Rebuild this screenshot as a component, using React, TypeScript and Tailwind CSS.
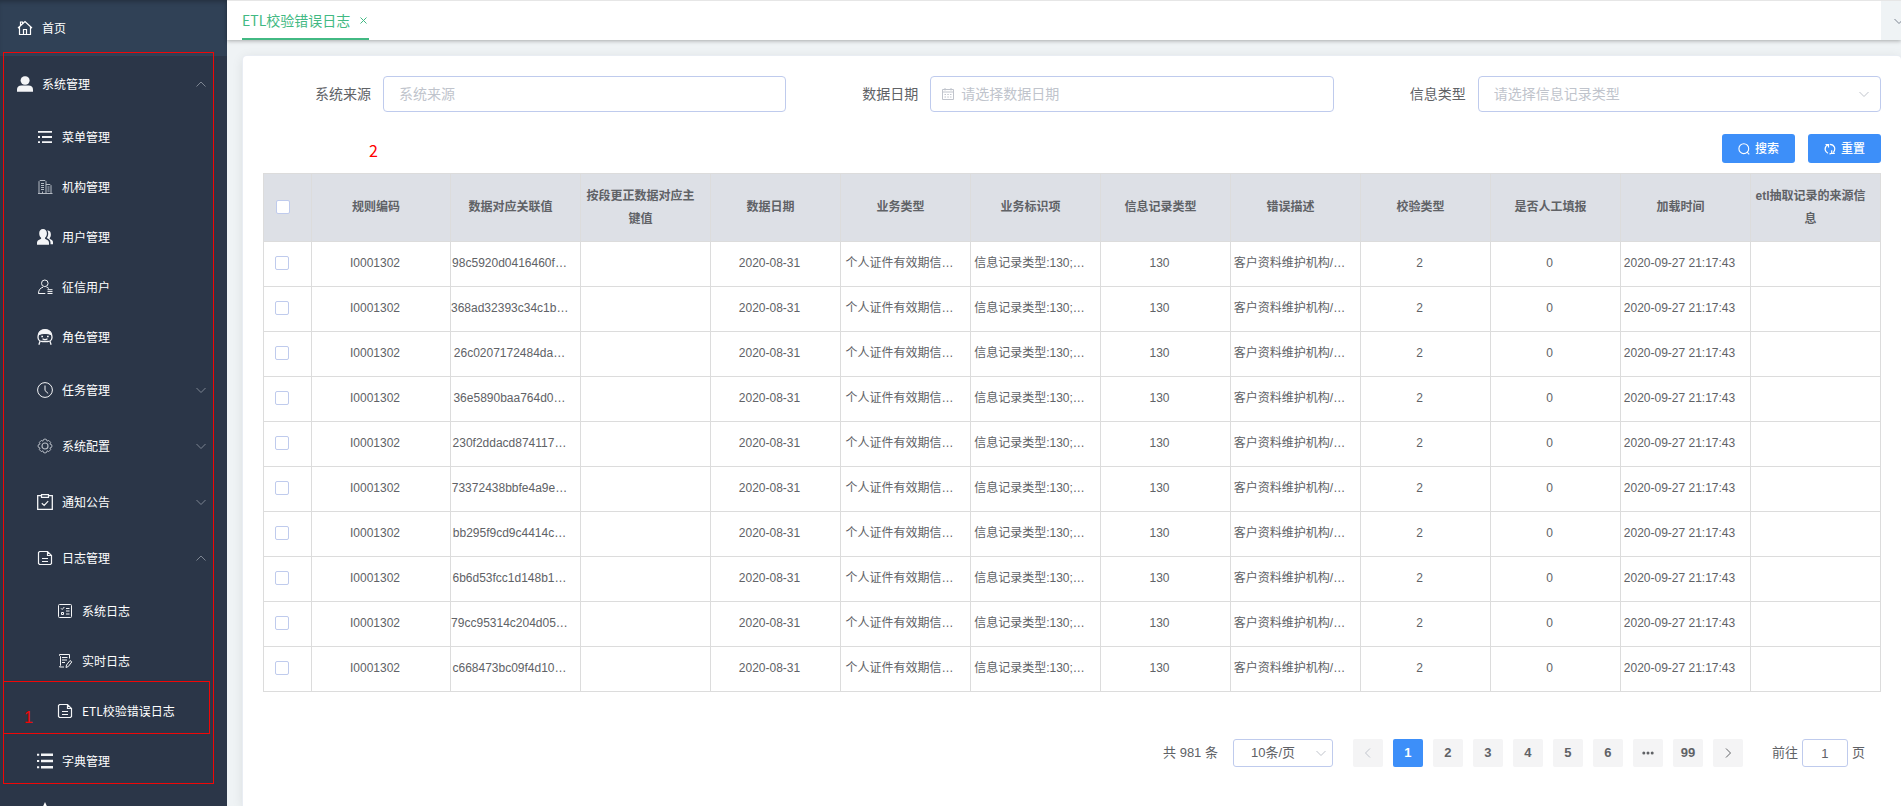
import React from "react"

type IconProps = { className?: string }

const Chevron = ({ up, className = "" }: { up?: boolean; className?: string }) => (
  <svg viewBox="0 0 12 12" className={`w-3 h-3 shrink-0 ${className}`} fill="none" stroke="currentColor">
    <path d={up ? "M1.5 8.5 6 4l4.5 4.5" : "M1.5 4 6 8.5 10.5 4"} />
  </svg>
)

const line = { viewBox: "0 0 16 16", fill: "none", stroke: "currentColor", strokeWidth: 1 }
const solid = { viewBox: "0 0 16 16", fill: "currentColor" }

const HouseIcon = ({ className }: IconProps) => (
  <svg {...line} className={className}>
    <path d="M1 8 8 1.500l7 6.500M2.500 7v7.500h11V7M3.500 5.800V2h2v2M6.500 14.500V9.500h3v5" strokeWidth="1.200" />
  </svg>
)

const UserSolidIcon = ({ className }: IconProps) => (
  <svg {...solid} className={className}>
    <rect x="3.6" y="0.3" width="9" height="8.4" rx="4.2" />
    <path d="M0 15.8v-2.3c0-2.6 1.8-4 4.4-4h7.2c2.6 0 4.4 1.4 4.4 4v2.3z" />
  </svg>
)

const MenuIcon = ({ className }: IconProps) => (
  <svg {...solid} className={className}>
    <path d="M1 2h14v1.8H1zM1 7.1h2v1.8H1zM5 7.1h10v1.8H5zM1 12.2h2V14H1zM5 12.2h10V14H5z" />
  </svg>
)

const BuildingIcon = ({ className }: IconProps) => (
  <svg {...line} className={className}>
    <path d="M1 14.5h14.5M2 14.5v-12L3 1.5h5l1 1v12M9 5.5h4l1 1v8M4 4.5h3M4 6.5h3M4 8.5h3M4 10.5h3M10.5 8h2M10.5 10h2M10.5 12h2M5.5 14.5v-2" />
  </svg>
)

const UsersIcon = ({ className }: IconProps) => (
  <svg {...solid} className={className}>
    <path d="M6 0C3.700 0 2.200 1.800 2.200 4.300c0 1.900.7 3.600 1.900 4.500v1L1.300 11.300C.3 12 0 13 0 14v1.800h12V14c0-1-.3-2-1.300-2.700L8 9.800v-1c1.200-.9 1.900-2.600 1.900-4.500C9.900 1.800 8.400 0 6 0z" />
    <path d="M10.200 1.600c.7.700 1 1.700 1 2.900 0 1.800-.5 3.200-1.500 4.400l2.200 1.400c1.100.8 1.500 1.900 1.600 3.200v1.700H16v-1.700c0-.9-.3-1.800-1.200-2.400L12.700 9.700v-.8c.8-.9 1.200-2.100 1.200-3.500 0-2.400-1.400-4-3.700-3.800z" />
  </svg>
)

const CreditUserIcon = ({ className }: IconProps) => (
  <svg {...line} className={className}>
    <circle cx="7.800" cy="4.300" r="3.300" />
    <path d="M1.500 14.500c0-3.500 1.800-5.600 4.500-6.200M9.600 8.300c1 .2 1.700.6 2.300 1.200M1.300 14.500h7M10.500 10.700h5M10.500 12.600h5M10.500 14.500h5" />
  </svg>
)

const RoleIcon = ({ className }: IconProps) => (
  <svg {...line} className={className}>
    <path d="M1.200 6.200C1.500 2.500 4 .5 8 .5s6.500 2 6.800 5.700C13 5 11 4.500 8 4.500s-5 .5-6.800 1.700z" fill="currentColor" />
    <rect x="1" y="3.800" width="14" height="8.700" rx="4.300" strokeWidth="1.300" />
    <path d="M4.300 7.500h1.700M10 7.500h1.700M5.500 9.800c1.600 1 3.400 1 5 0M3 12.300 1.900 15.700M13 12.300l1.100 3.400" strokeWidth="1.300" />
  </svg>
)

const ClockIcon = ({ className }: IconProps) => (
  <svg {...line} className={className}>
    <circle cx="8" cy="8" r="7.400" />
    <path d="M8 3.500V8.500l3.200 3" />
  </svg>
)

const GearIcon = ({ className }: IconProps) => (
  <svg {...line} className={className}>
    <path d="M6.500 1.500 8 1l1.500.5.600 1.700 1.600-.8 2 2-.8 1.600 1.600.6L15 8l-.5 1.400-1.600.6.8 1.600-2 2-1.600-.8-.6 1.700L8 15l-1.500-.5-.6-1.700-1.600.8-2-2 .8-1.600-1.600-.6L1 8l.5-1.400 1.600-.6-.8-1.600 2-2 1.600.8z" />
    <circle cx="8" cy="8" r="3" strokeWidth="1.200" />
  </svg>
)

const ClipboardIcon = ({ className }: IconProps) => (
  <svg {...line} className={className}>
    <path d="M4.500 1.700H.7v13.600h14.600V1.700h-3.800" strokeWidth="1.300" />
    <path d="M4.500.6h7v2.800h-7zM4.800 9.200l2.400 2.300 4-4.300" strokeWidth="1.200" />
  </svg>
)

const DocIcon = ({ className }: IconProps) => (
  <svg {...line} className={className}>
    <path d="M10.500 1.500H2.500l-1 1v11l1 1h11l1-1v-8zM10.500 1.500v4h4" strokeWidth="1.200" />
    <path d="M5 8.500h6M5 11.500h6" />
  </svg>
)

const ChecklistIcon = ({ className }: IconProps) => (
  <svg {...line} className={className}>
    <rect x="1.500" y="1.500" width="13" height="13" rx="1" />
    <path d="M4 5.300 5.200 6.500 7.300 4M9 5.500h3.500M9 8h3.500M9 11h3.500M4.500 9.500h2v2h-2z" />
  </svg>
)

const EditDocIcon = ({ className }: IconProps) => (
  <svg {...line} className={className}>
    <path d="M12.500 5.500v-4H2.500v1l1 1v9l-1 1.500H7M5 4.500h5.500M5 7h5M5 9.500h3M9 14.500l.5-2.500L13 7.500l1.800 1.400-3.500 4.600z" />
  </svg>
)

const ListIcon = ({ className }: IconProps) => (
  <svg {...solid} className={className}>
    <path d="M4 .5h12v2.400H4zM4 6.800h12v2.400H4zM4 13.100h12v2.400H4z" />
    <path d="M0 .7h2.200v2H0zM0 7h2.200v2H0zM0 13.300h2.200v2H0z" />
  </svg>
)

const StarIcon = ({ className }: IconProps) => (
  <svg {...solid} className={className}>
    <path d="m8 0 2.400 5.300 5.600.6-4.200 3.900L13 15.500 8 12.600 3 15.500l1.200-5.700L0 5.900l5.600-.6z" />
  </svg>
)

const CalendarIcon = ({ className }: IconProps) => (
  <svg viewBox="0 0 14 14" fill="none" stroke="currentColor" className={className}>
    <path d="M1.500 2.500h11v10h-11zM1.500 5h11M4 1v2.500M10 1v2.500M3.500 7.500h1.500M6.300 7.500h1.500M9 7.500h1.500M3.500 10h1.500M6.300 10h1.500M9 10h1.500" />
  </svg>
)

const SearchIcon = ({ className }: IconProps) => (
  <svg viewBox="0 0 12 12" fill="none" stroke="currentColor" strokeWidth="1.100" className={className}>
    <circle cx="5.800" cy="5.700" r="4.900" />
    <path d="m9.200 9.200 2 2.200" />
  </svg>
)

const RefreshIcon = ({ className }: IconProps) => (
  <svg viewBox="0 0 12 12" fill="none" stroke="currentColor" strokeWidth="1.200" className={className}>
    <path d="M1.500 1.500H4.500v3M4 1.800C1.500 3 .8 5 1.300 7.200 1.600 8.600 2.600 9.700 4 10.300M5.800 1.300c2 0 4 1.200 4.700 3 .5 1.700.2 3.600-1.200 5M10.800 10.300H7.700v-3M7.500 10.300c-.7.400-1.300.5-2 .5" />
  </svg>
)

type MenuItem = {
  label: string
  icon: React.FC<IconProps>
  level: 1 | 2 | 3
  arrow?: "up" | "down"
  dim?: boolean
}

const menu: MenuItem[] = [
  { label: "系统管理", icon: UserSolidIcon, level: 1, arrow: "up" },
  { label: "菜单管理", icon: MenuIcon, level: 2 },
  { label: "机构管理", icon: BuildingIcon, level: 2, dim: true },
  { label: "用户管理", icon: UsersIcon, level: 2 },
  { label: "征信用户", icon: CreditUserIcon, level: 2 },
  { label: "角色管理", icon: RoleIcon, level: 2 },
  { label: "任务管理", icon: ClockIcon, level: 2, arrow: "down" },
  { label: "系统配置", icon: GearIcon, level: 2, arrow: "down", dim: true },
  { label: "通知公告", icon: ClipboardIcon, level: 2, arrow: "down" },
  { label: "日志管理", icon: DocIcon, level: 2, arrow: "up" },
  { label: "系统日志", icon: ChecklistIcon, level: 3 },
  { label: "实时日志", icon: EditDocIcon, level: 3 },
  { label: "ETL校验错误日志", icon: DocIcon, level: 3 },
  { label: "字典管理", icon: ListIcon, level: 2 },
]

const indent = { 1: "pl-[13px]", 2: "pl-[33px]", 3: "pl-[53px]" }

const headers = [
  "规则编码",
  "数据对应关联值",
  "按段更正数据对应主键值",
  "数据日期",
  "业务类型",
  "业务标识项",
  "信息记录类型",
  "错误描述",
  "校验类型",
  "是否人工填报",
  "加载时间",
  "etl抽取记录的来源信息",
]

const keys = [
  "98c5920d0416460f…",
  "368ad32393c34c1b…",
  "26c0207172484da…",
  "36e5890baa764d0…",
  "230f2ddacd874117…",
  "73372438bbfe4a9e…",
  "bb295f9cd9c4414c…",
  "6b6d53fcc1d148b1…",
  "79cc95314c204d05…",
  "c668473bc09f4d10…",
]

const rows = keys.map((key) => [
  "I0001302",
  key,
  "",
  "2020-08-31",
  "个人证件有效期信…",
  "信息记录类型:130;…",
  "130",
  "客户资料维护机构/…",
  "2",
  "0",
  "2020-09-27 21:17:43",
  "",
])

const checkbox =
  "appearance-none block w-[14px] h-[14px] rounded-[2px] border border-[#bfcbed] bg-white checked:bg-[#3d8ff9]"
const field =
  "w-full h-9 rounded border border-[#bfcbed] bg-white text-sm text-[#606266] placeholder:text-[#c0c4cc] outline-none"
const pageButton = "w-[30px] h-7 rounded-[2px] flex items-center justify-center"

function Sidebar() {
  return (
    <aside className="relative w-[227px] shrink-0 h-full overflow-hidden bg-[#2b3648] text-white text-xs font-['Noto_Sans_CJK_SC',sans-serif]">
      <nav>
        <a
          href="#home"
          className="h-14 pl-[13px] flex items-center bg-[#304156] shadow-[inset_0_4px_4px_-2px_rgba(0,0,0,0.25)]"
        >
          <span className="w-6 mr-[5px] flex justify-center">
            <HouseIcon className="w-4 h-4" />
          </span>
          首页
        </a>
        {menu.map(({ label, icon: Icon, level, arrow, dim }) => (
          <a
            key={label}
            href={`#${label}`}
            className={`${arrow ? "h-14" : "h-[50px]"} ${indent[level]} pr-5 flex items-center`}
          >
            <span className={`w-6 mr-[5px] flex justify-center ${dim ? "text-[#b4bac3]" : "text-[#f4f5f7]"}`}>
              <Icon className="w-4 h-4" />
            </span>
            <span className="flex-1">{label}</span>
            {arrow && <Chevron up={arrow === "up"} className="text-[#7d8592]" />}
          </a>
        ))}
        <a href="#more" aria-label="more" className="h-14 pl-[33px] flex items-center">
          <span className="w-6 flex justify-center">
            <StarIcon className="w-6 h-6 shrink-0" />
          </span>
        </a>
      </nav>

      {/* callout frames */}
      <div className="absolute left-[3px] top-[52px] w-[211px] h-[732px] border border-[#f00707] pointer-events-none" />
      <div className="absolute left-[3px] top-[681px] w-[207px] h-[53px] border border-[#f00707] pointer-events-none" />
      <span className="absolute left-6 top-[708px] text-base leading-5 text-[#f00707] font-['Liberation_Sans',sans-serif]">1</span>
    </aside>
  )
}

function Filters() {
  return (
    <form className="text-sm" onSubmit={(e) => e.preventDefault()}>
      <div className="grid grid-cols-3 gap-6 text-[#606266]">
        <div className="flex items-center">
          <label htmlFor="source" className="w-[120px] shrink-0 pr-3 text-right">系统来源</label>
          <input id="source" className={`${field} px-[15px]`} placeholder="系统来源" />
        </div>
        <div className="flex items-center">
          <label htmlFor="date" className="w-[120px] shrink-0 pr-3 text-right">数据日期</label>
          <div className="relative flex-1">
            <CalendarIcon className="absolute left-[11px] top-[11px] w-[14px] h-[14px] text-[#c0c4cc]" />
            <input id="date" className={`${field} pl-[30px] pr-[15px]`} placeholder="请选择数据日期" />
          </div>
        </div>
        <div className="flex items-center">
          <label htmlFor="type" className="w-[120px] shrink-0 pr-3 text-right">信息类型</label>
          <div className="relative flex-1">
            <select id="type" defaultValue="" className={`${field} appearance-none px-[15px] text-[#c0c4cc]!`}>
              <option value="">请选择信息记录类型</option>
            </select>
            <Chevron className="absolute right-[11px] top-3 text-[#c0c4cc] pointer-events-none" />
          </div>
        </div>
      </div>

      <div className="mt-[22px] flex justify-end gap-[13px] text-xs font-medium text-white">
        <button type="submit" className="w-[73px] h-[29px] rounded-[3px] bg-[#3d8ff9] flex items-center justify-center gap-[5px]">
          <SearchIcon className="w-3 h-3" />
          搜索
        </button>
        <button type="reset" className="w-[73px] h-[29px] rounded-[3px] bg-[#3d8ff9] flex items-center justify-center gap-[5px]">
          <RefreshIcon className="w-3 h-3" />
          重置
        </button>
      </div>
    </form>
  )
}

function LogTable() {
  return (
    <table className="mt-[10px] w-full table-fixed border-collapse text-xs text-[#606266] text-center">
      <colgroup>
        <col className="w-12" />
        <col className="w-[139px]" />
        {headers.slice(1).map((h) => (
          <col key={h} />
        ))}
      </colgroup>
      <thead>
        <tr className="h-[68px] bg-[#dde0e6]">
          <th className="border border-[#dcdcdc] pl-3 pb-[2px]">
            <input type="checkbox" aria-label="全选" className={checkbox} />
          </th>
          {headers.map((h) => (
            <th key={h} className="border border-[#dcdcdc] pl-[3px] pr-[13px] leading-[23px] font-bold">
              {h}
            </th>
          ))}
        </tr>
      </thead>
      <tbody>
        {rows.map((row, i) => (
          <tr key={keys[i]} className="h-[45px]">
            <td className="border border-[#dcdcdc] pl-[11px] pb-[2px]">
              <input type="checkbox" aria-label={keys[i]} className={checkbox} />
            </td>
            {row.map((cell, j) => (
              <td key={j} className="border border-[#dcdcdc] pr-3 pb-[2px] whitespace-nowrap">
                {cell}
              </td>
            ))}
          </tr>
        ))}
      </tbody>
    </table>
  )
}

function Pagination() {
  return (
    <div className="mt-[47px] pr-4 flex items-center justify-end text-[13px] text-[#606266]">
      <span className="mr-[15px]">共 981 条</span>
      <div className="relative mr-5">
        <select
          aria-label="每页条数"
          className="appearance-none block w-[100px] h-7 pl-[17px] rounded-[3px] border border-[#bfcbed] bg-white outline-none"
        >
          <option>10条/页</option>
        </select>
        <Chevron className="absolute right-[6px] top-2 text-[#c0c4cc] pointer-events-none" />
      </div>
      <div className="flex gap-[10px] font-bold">
        <button type="button" aria-label="上一页" className={`${pageButton} bg-[#f4f4f5] text-[#c0c4cc]`}>
          <Chevron className="rotate-90" />
        </button>
        {["1", "2", "3", "4", "5", "6", "more", "99"].map((p) => (
          <button
            key={p}
            type="button"
            aria-label={p}
            className={`${pageButton} ${p === "1" ? "bg-[#3d8ff9] text-white" : "bg-[#f4f4f5]"}`}
          >
            {p === "more" ? (
              <svg viewBox="0 0 12 4" className="w-3 h-1" fill="currentColor">
                <circle cx="1.800" cy="2" r="1.500" />
                <circle cx="6" cy="2" r="1.500" />
                <circle cx="10.200" cy="2" r="1.500" />
              </svg>
            ) : (
              p
            )}
          </button>
        ))}
        <button type="button" aria-label="下一页" className={`${pageButton} bg-[#f4f4f5]`}>
          <Chevron className="-rotate-90" />
        </button>
      </div>
      <label htmlFor="jump" className="ml-[29px] mr-1">前往</label>
      <input
        id="jump"
        defaultValue="1"
        className="w-[46px] h-7 rounded-[3px] border border-[#bfcbed] bg-white text-center outline-none"
      />
      <span className="ml-1">页</span>
    </div>
  )
}

export default function App() {
  return (
    <div className="flex h-screen overflow-hidden bg-[#eff3f5] font-['Liberation_Sans','Noto_Sans_CJK_SC',sans-serif]">
      <Sidebar />
      <div className="flex-1 min-w-0 flex flex-col">
        <header className="relative z-10 h-10 shrink-0 flex bg-white border-t border-[#e6e6e6] shadow-[0_1px_4px_rgba(0,0,0,0.3)]">
          <div className="flex-1 pl-[15px] flex font-['Noto_Sans_CJK_SC',sans-serif]">
            <div className="flex items-center gap-2 border-b-2 border-[#42b983] text-[#42b983]">
              <a href="#etl" className="text-sm">ETL校验错误日志</a>
              <button type="button" aria-label="关闭" className="w-[11px] pt-[2px]">
                <svg viewBox="0 0 11 11" className="block w-[11px] h-[11px]" stroke="currentColor" fill="none">
                  <path d="m2.500 2.500 6 6M8.500 2.500l-6 6" />
                </svg>
              </button>
            </div>
          </div>
          <button type="button" aria-label="更多标签" className="w-5 bg-[#eff3f5] pl-3 overflow-hidden text-[#7d8592]">
            <Chevron />
          </button>
        </header>

        <main className="flex-1 min-h-0 pl-4 pt-4">
          <section className="relative h-full p-5 rounded-t bg-white ring-1 ring-[#e9edf3] shadow-[0_2px_12px_rgba(0,0,0,0.1)]">
            <Filters />
            <LogTable />
            <Pagination />
            <span className="absolute left-[126px] top-[84px] text-base leading-5 text-[#f00] font-['Noto_Sans_CJK_SC',sans-serif]">2</span>
          </section>
        </main>
      </div>
    </div>
  )
}
